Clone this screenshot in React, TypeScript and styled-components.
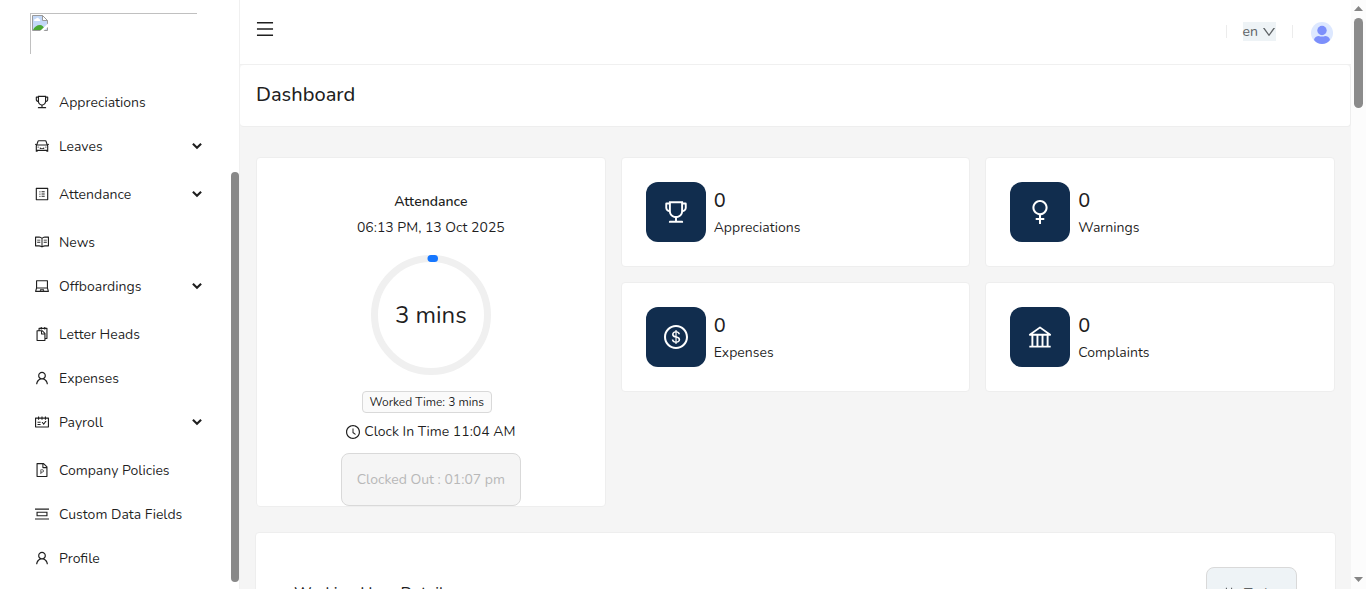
import React from "react";
import styled, { createGlobalStyle } from "styled-components";
import type { IconType } from "react-icons";
import {
  AiOutlineBank,
  AiOutlineCalendar,
  AiOutlineCar,
  AiOutlineClockCircle,
  AiOutlineDollarCircle,
  AiOutlineDown,
  AiOutlineFilePpt,
  AiOutlineLaptop,
  AiOutlineMenu,
  AiOutlinePicCenter,
  AiOutlineProfile,
  AiOutlineRead,
  AiOutlineSchedule,
  AiOutlineSnippets,
  AiOutlineTrophy,
  AiOutlineUser,
  AiOutlineWoman,
} from "react-icons/ai";

const GlobalStyle = createGlobalStyle`
  *, *::before, *::after { box-sizing: border-box; }
  body {
    margin: 0;
    background: #f5f5f5;
    color: rgba(0, 0, 0, 0.88);
    font-family: Nunito, Lato, "Open Sans", sans-serif;
    font-size: 14px;
    line-height: 24px;
  }
  button { font: inherit; color: inherit; cursor: pointer; }
  svg { display: block; flex: none; }
`;

const Shell = styled.div`
  display: flex;
  height: 100vh;
  overflow: hidden;
`;

const Sidebar = styled.aside`
  display: flex;
  flex-direction: column;
  flex: none;
  width: 240px;
  background: #fff;
  border-right: 1px solid #f0f0f0;
`;

const LogoFrame = styled.div`
  flex: none;
  width: 167px;
  height: 41px;
  margin: 13px 0 0 30px;
  padding: 1px;
  border: solid #c0c0c0;
  border-width: 1px 0 0 1px;
`;

const MenuArea = styled.div`
  display: flex;
  flex: 1;
  min-height: 0;
  padding-top: 28px;
`;

const Menu = styled.nav`
  flex: 1;
  min-width: 0;
  padding: 0 13px;
  overflow: hidden;
`;

const MenuLink = styled.a<{ $group?: boolean }>`
  display: flex;
  align-items: center;
  gap: 10px;
  height: 40px;
  margin-bottom: ${(p) => (p.$group ? 8 : 4)}px;
  padding: 0 16px 0 22px;
  color: inherit;
  text-decoration: none;
  border-radius: 8px;
`;

const MenuLabel = styled.span`
  flex: 1;
  padding-top: 2px;
  white-space: nowrap;
`;

const SideScroll = styled.div`
  flex: none;
  width: 8px;
  margin: 90px 0 7px;
  border-radius: 4px;
  background: #888;
`;

const Main = styled.div`
  flex: 1;
  min-width: 0;
  overflow: hidden;
`;

const TopBar = styled.header`
  display: flex;
  align-items: center;
  justify-content: space-between;
  height: 65px;
  padding: 0 18px 0 16px;
  background: #fff;
  border-bottom: 1px solid #f0f0f0;
`;

const PlainButton = styled.button`
  display: flex;
  margin-bottom: 6px;
  padding: 0;
  border: 0;
  background: none;
`;

const TopTools = styled.div`
  display: flex;
  align-items: center;
  margin-bottom: 2px;
`;

const Divider = styled.span`
  width: 1px;
  height: 13px;
  background: #ececec;
`;

const LangButton = styled.button`
  display: flex;
  align-items: center;
  gap: 4px;
  height: 19px;
  margin: 0 16px 0 16px;
  padding: 1px 0 0;
  border: 0;
  background: #eef3f6;
  color: #5f6366;
`;

const AvatarButton = styled.button`
  width: 22px;
  height: 22px;
  margin: 3px 0 0 18px;
  padding: 0;
  border: 0;
  border-radius: 50%;
  background: #dde8ff;
`;

const TitleBar = styled.div`
  height: 62px;
  padding: 14px 16px;
  background: #fff;
  border: 1px solid #eee;
  border-top: 0;
  border-left: 0;
  border-radius: 4px;
`;

const Title = styled.h1`
  margin: 0;
  font-size: 20px;
  font-weight: 500;
  line-height: 32px;
`;

const Content = styled.main`
  padding: 30px 16px 0;
`;

const Widgets = styled.div`
  display: grid;
  grid-template-columns: repeat(3, 1fr);
  grid-template-rows: 110px 110px 100px;
  gap: 15px 15px;
`;

const Card = styled.section`
  display: flex;
  align-items: center;
  gap: 8px;
  padding: 0 24px;
  background: #fff;
  border: 1px solid #eee;
  border-radius: 4px;
`;

const AttendanceCard = styled(Card)`
  grid-row: span 3;
  flex-direction: column;
  gap: 0;
  padding-top: 32px;
`;

const CardHeading = styled.h2`
  margin: 0 0 2px;
  font-size: 14px;
  font-weight: 600;
  line-height: 24px;
`;

const Ring = styled.div`
  display: grid;
  place-items: center;
  margin: 15px 0 16px;
  font-size: 24px;

  > * { grid-area: 1 / 1; }
`;

const Tag = styled.span`
  flex: none;
  margin-right: 8px;
  padding: 0 7px;
  border: 1px solid #d9d9d9;
  border-radius: 4px;
  background: #fafafa;
  font-size: 12px;
  line-height: 20px;
`;

const ClockLine = styled.div`
  display: flex;
  align-items: center;
  gap: 4px;
  margin: 7px 0 9px;
`;

const ClockedOut = styled.button`
  flex: none;
  height: 53px;
  padding: 0 15px;
  border: 1px solid #d9d9d9;
  border-radius: 8px;
  background: #f5f5f5;
  color: #b8b8b8;
`;

const IconTile = styled.div`
  display: grid;
  place-items: center;
  width: 60px;
  height: 60px;
  border-radius: 12px;
  background: #112d4e;
  color: #fff;
`;

const StatText = styled.div`
  padding-top: 3px;
`;

const StatValue = styled.div`
  font-size: 20px;
  font-weight: 500;
  line-height: 28px;
`;

const StatLabel = styled.div`
  line-height: 26px;
`;

const HoursPanel = styled.section`
  display: flex;
  align-items: flex-start;
  justify-content: space-between;
  height: 300px;
  margin: 25px -1px 0;
  padding: 34px 38px;
  background: #fff;
  border: 1px solid #eee;
  border-radius: 4px;
`;

const PanelTitle = styled.h2`
  margin: 12px 0 0;
  font-size: 16px;
  font-weight: 500;
  line-height: 28px;
`;

const TodayButton = styled.button`
  display: flex;
  align-items: center;
  gap: 8px;
  width: 91px;
  height: 53px;
  padding: 0 15px;
  border: 1px solid #d9d9d9;
  border-radius: 8px;
  background: #eef3f6;
  color: #5f6366;
`;

const PageScroll = styled.div`
  display: flex;
  flex-direction: column;
  align-items: center;
  justify-content: space-between;
  flex: none;
  width: 15px;
  padding: 6px 0 7px;
  background: #fcfcfc;
`;

const PageThumb = styled.div`
  width: 9px;
  height: 90px;
  margin: 7px 0 auto;
  border-radius: 5px;
  background: #8b8b8b;
`;

const Glyph = ({ icon: Icon, size = 14 }: { icon: IconType; size?: number }) => (
  <Icon size={size} viewBox="64 64 896 896" aria-hidden="true" />
);

const BrokenImage = () => (
  <svg width="16" height="16" viewBox="0 0 16 16" role="img" aria-label="Image unavailable">
    <path d="M.5.5h10l5 5v10H.5z" fill="#c3d8f7" stroke="#9a9a9a" />
    <path d="M2 5.500c0-1.200 1-2 2-1.800.6-1.200 2.600-1.200 3 .3 1.300 0 1.700 1.500.8 2H2.500z" fill="#fff" />
    <path d="M1 15c1-3 4-5 7-5 2 0 4 1.500 5 5z" fill="#4aa832" />
    <path d="M10.500.5v5h5z" fill="#fff" stroke="#9a9a9a" />
    <path d="M8 16l8-7.500V12l-4.500 4z" fill="#fff" />
  </svg>
);

const Chevron = () => (
  <svg width="10" height="8" viewBox="0 0 10 8" aria-hidden="true">
    <path d="M.9 1.700 5 5.700 9.100 1.700" fill="none" stroke="#1f1f1f" strokeWidth="2.100" />
  </svg>
);

const Avatar = () => (
  <svg width="22" height="22" viewBox="0 0 22 22" aria-hidden="true">
    <circle cx="11" cy="8.500" r="4.700" fill="#7c8ffb" />
    <path d="M3 18c.3-2.600 2.600-4 5-4 1 .7 5 .7 6 0 2.400 0 4.700 1.400 5 4-4 5.300-12 5.300-16 0z" fill="#7c8ffb" />
  </svg>
);

const ProgressRing = () => (
  <svg width="120" height="120" viewBox="0 0 120 120" aria-hidden="true">
    <circle cx="60" cy="60" r="56.500" fill="none" stroke="#f0f0f0" strokeWidth="7" />
    <path d="M60 3.500a56.500 56.500 0 0 1 3.500.1" fill="none" stroke="#1677ff" strokeWidth="7" strokeLinecap="round" />
  </svg>
);

const ScrollArrow = ({ down }: { down?: boolean }) => (
  <svg width="9" height="5" viewBox="0 0 9 5" aria-hidden="true">
    <path d={down ? "M0 0h9L4.500 5z" : "M0 5h9L4.500 0z"} fill="#858585" />
  </svg>
);

const menu: { label: string; icon: IconType; group?: boolean }[] = [
  { label: "Appreciations", icon: AiOutlineTrophy },
  { label: "Leaves", icon: AiOutlineCar, group: true },
  { label: "Attendance", icon: AiOutlineProfile, group: true },
  { label: "News", icon: AiOutlineRead },
  { label: "Offboardings", icon: AiOutlineLaptop, group: true },
  { label: "Letter Heads", icon: AiOutlineSnippets },
  { label: "Expenses", icon: AiOutlineUser },
  { label: "Payroll", icon: AiOutlineSchedule, group: true },
  { label: "Company Policies", icon: AiOutlineFilePpt },
  { label: "Custom Data Fields", icon: AiOutlinePicCenter },
  { label: "Profile", icon: AiOutlineUser },
];

const stats: { label: string; value: number; icon: IconType }[] = [
  { label: "Appreciations", value: 0, icon: AiOutlineTrophy },
  { label: "Warnings", value: 0, icon: AiOutlineWoman },
  { label: "Expenses", value: 0, icon: AiOutlineDollarCircle },
  { label: "Complaints", value: 0, icon: AiOutlineBank },
];

export default function App() {
  return (
    <>
      <GlobalStyle />
      <Shell>
        <Sidebar>
          <LogoFrame>
            <BrokenImage />
          </LogoFrame>
          <MenuArea>
            <Menu>
              {menu.map(({ label, icon, group }) => (
                <MenuLink key={label} href="#" $group={group}>
                  <Glyph icon={icon} />
                  <MenuLabel>{label}</MenuLabel>
                  {group && <Chevron />}
                </MenuLink>
              ))}
            </Menu>
            <SideScroll />
          </MenuArea>
        </Sidebar>
        <Main>
          <TopBar>
            <PlainButton aria-label="Toggle menu">
              <Glyph icon={AiOutlineMenu} size={18} />
            </PlainButton>
            <TopTools>
              <Divider />
              <LangButton>
                en
                <Glyph icon={AiOutlineDown} />
              </LangButton>
              <Divider />
              <AvatarButton aria-label="Account">
                <Avatar />
              </AvatarButton>
            </TopTools>
          </TopBar>
          <TitleBar>
            <Title>Dashboard</Title>
          </TitleBar>
          <Content>
            <Widgets>
              <AttendanceCard>
                <CardHeading>Attendance</CardHeading>
                <div>06:13 PM, 13 Oct 2025</div>
                <Ring>
                  <ProgressRing />
                  <span>3 mins</span>
                </Ring>
                <Tag>Worked Time: 3 mins</Tag>
                <ClockLine>
                  <Glyph icon={AiOutlineClockCircle} />
                  Clock In Time 11:04 AM
                </ClockLine>
                <ClockedOut disabled>Clocked Out : 01:07 pm</ClockedOut>
              </AttendanceCard>
              {stats.map(({ label, value, icon }) => (
                <Card key={label}>
                  <IconTile>
                    <Glyph icon={icon} size={24} />
                  </IconTile>
                  <StatText>
                    <StatValue>{value}</StatValue>
                    <StatLabel>{label}</StatLabel>
                  </StatText>
                </Card>
              ))}
            </Widgets>
            <HoursPanel>
              <PanelTitle>Working Hour Details</PanelTitle>
              <TodayButton>
                <Glyph icon={AiOutlineCalendar} />
                Today
              </TodayButton>
            </HoursPanel>
          </Content>
        </Main>
        <PageScroll>
          <ScrollArrow />
          <PageThumb />
          <ScrollArrow down />
        </PageScroll>
      </Shell>
    </>
  );
}
